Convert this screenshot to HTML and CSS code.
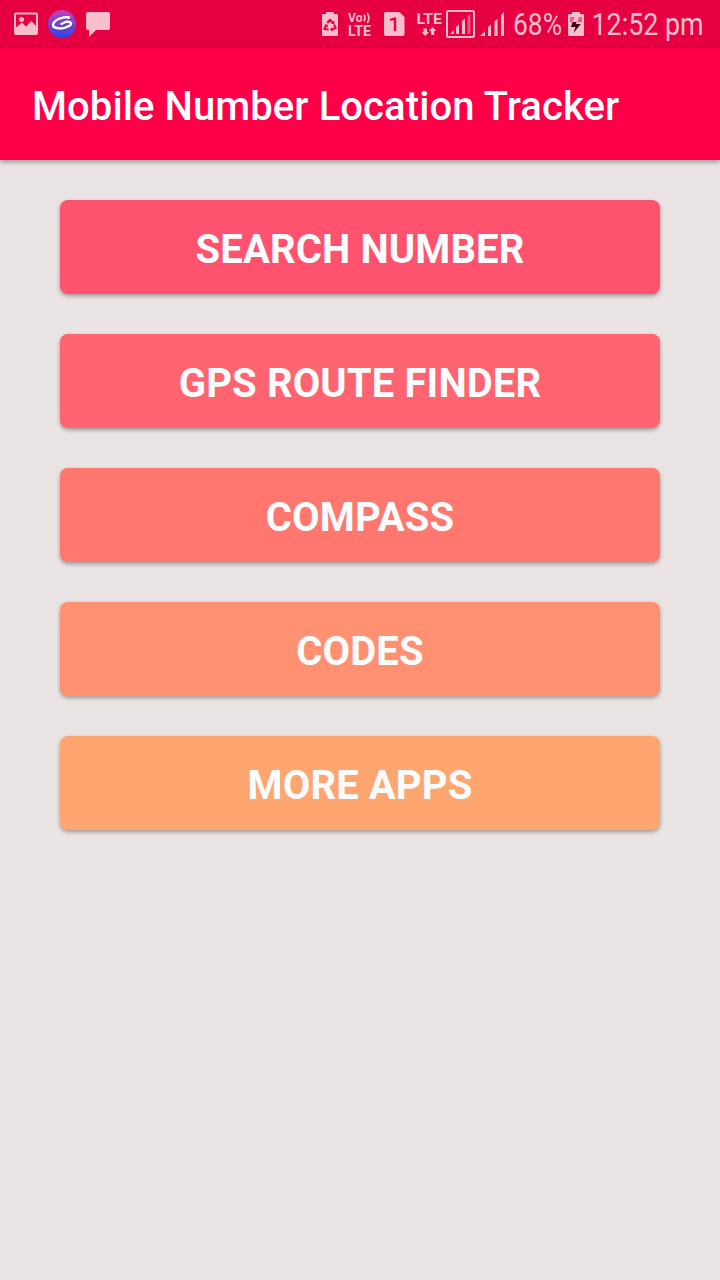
FILE: index.html
```html
<!DOCTYPE html>
<html lang="en">
<head>
<meta charset="utf-8">
<title>Mobile Number Location Tracker</title>
<link rel="stylesheet" href="styles.css">
</head>
<body>
<div class="status">
  <div class="notifications">
    <svg class="icon" width="24" height="48" viewBox="0 0 24 48"><path fill-rule="evenodd" d="M2 12.5H22Q24 12.5 24 14.5V33Q24 35 22 35H2Q0 35 0 33V14.5Q0 12.5 2 12.5ZM2 14.5V27.5L8 22.5L12 26.5L17.5 21L22 26V14.5Z"/><circle cx="7.5" cy="19.5" r="2.5"/></svg>
    <svg width="28" height="48" viewBox="0 0 28 48"><defs><linearGradient id="orb" x1="0" y1="0" x2="0" y2="1"><stop offset="0" stop-color="#c33fb4"/><stop offset=".5" stop-color="#7545d2"/><stop offset="1" stop-color="#2c43ed"/></linearGradient></defs><circle cx="14" cy="24" r="14" fill="url(#orb)"/><g fill="none" stroke-linejoin="round"><path d="M22 17.8C17 16 7 19 5 24.5C4.5 29.5 16 29.5 22 25.5C25 22.5 21 21.5 17.5 22L12.5 24.5" stroke="#34266e" stroke-width="2" transform="translate(.4 1)" opacity=".55"/><path d="M22 17.8C17 16 7 19 5 24.5C4.5 29.5 16 29.5 22 25.5C25 22.5 21 21.5 17.5 22L12.5 24.5" stroke="#fff" stroke-width="2.5"/></g></svg>
    <svg class="icon" width="24" height="48" viewBox="0 0 24 48"><path d="M2 12H22Q24 12 24 14V28Q24 30 22 30H10L3 37V30H2Q0 30 0 28V14Q0 12 2 12Z"/></svg>
  </div>
  <div class="system">
    <svg class="icon" width="16" height="48" viewBox="0 0 16 48"><path d="M4 12H12V14H15Q16 14 16 15V35Q16 36 15 36H1Q0 36 0 35V15Q0 14 1 14H4Z"/><g class="cut" stroke-width="2"><path d="M5.3 23L8 19.8L10.8 23M12 24.5L13.6 28.2L9.5 29.6M6.6 29.6L2.4 29L4.2 25"/></g><path class="cutfill" d="M12.5 20.5V24H9ZM10.5 27V31.5L7.8 29.5ZM2 24.8L5.5 24.4L6 27.5Z"/></svg>
    <svg class="icon volte" width="24" height="48" viewBox="0 0 24 48"><text x="0" y="22.4" font-size="13" textLength="14.5" lengthAdjust="spacingAndGlyphs">Vo</text><path d="M16 14.8Q18 18 16 21.2M19.2 13Q22.6 18 19.2 23" class="line wave"/><text x="0" y="36" font-size="14" textLength="23" lengthAdjust="spacingAndGlyphs">LTE</text></svg>
    <svg class="icon sim" width="20" height="48" viewBox="0 0 20 48"><path d="M2 12H15.5L20.5 17V34Q20.5 36 18.5 36H2Q0 36 0 34V14Q0 12 2 12Z"/><path class="cutfill" d="M6 20.8V18.8L10.5 17.5H12.2V31H9.8V20.3Z"/></svg>
    <svg class="icon lte" width="26" height="48" viewBox="0 0 26 48"><text x="-.5" y="24" font-size="15.5" textLength="25.5" lengthAdjust="spacingAndGlyphs">LTE</text><path d="M6.5 28.5H10V32H12L8.3 36L4.7 32H6.5ZM14 35V31H11.8L15.6 27L19.4 31H17.2V35Z"/></svg>
    <svg class="icon boxed" width="29" height="48" viewBox="0 0 29 48"><rect class="line" x="1" y="11" width="27" height="26" rx="1.5"/><path d="M4 34L8 30V34ZM10 27L13 24.5V34H10ZM16 21L19 18.5V34H16Z"/><path opacity=".45" d="M21.5 16.5L24.5 14V34H21.5Z"/></svg>
    <svg class="icon signal" width="24" height="48" viewBox="0 0 24 48"><path d="M0 36L5 31.5V36ZM8 27L11 24.5V36H8ZM14.5 21.5L17.5 19V36H14.5ZM21 15L24 12V36H21Z"/></svg>
    <svg class="icon percent" width="48" height="48" viewBox="0 0 48 48"><text x="-1" y="35" font-size="31" textLength="49" lengthAdjust="spacingAndGlyphs">68%</text></svg>
    <svg class="icon charge" width="16" height="48" viewBox="0 0 16 48"><path d="M4 12H12V14H15Q16 14 16 15V35Q16 36 15 36H1Q0 36 0 35V15Q0 14 1 14H4Z"/><path d="M2 17H14V22H2Z" fill="#f15a83"/><path fill="#f9bdcc" d="M7 17H11L9 22H4Z"/><path fill="#490016" d="M4.5 22H8.5L8 24H12.8L5.5 33L7.5 27H3Z"/></svg>
    <svg class="icon time" width="111" height="48" viewBox="0 0 111 48"><text x="-1.5" y="35" font-size="31" textLength="112" lengthAdjust="spacingAndGlyphs">12:52 pm</text></svg>
  </div>
</div>
<header class="appbar"><h1>Mobile Number Location Tracker</h1></header>
<main class="menu">
  <button class="item search">SEARCH NUMBER</button>
  <button class="item route">GPS ROUTE FINDER</button>
  <button class="item compass">COMPASS</button>
  <button class="item codes">CODES</button>
  <button class="item more">MORE APPS</button>
</main>
</body>
</html>
```
FILE: styles.css
```css
* { box-sizing: border-box; }
body { margin: 0; min-height: 1280px; background: #eae4e4; font-family: Roboto, sans-serif; }
svg { display: block; flex: none; overflow: visible; }
.status { height: 48px; background: #e60041; display: flex; justify-content: space-between; padding: 0 16px 0 14px; }
.notifications { display: flex; gap: 10px; }
.system { display: flex; }
.icon { fill: #f9bdcc; font-family: Roboto, sans-serif; }
.volte, .lte { font-weight: 700; }
.line { fill: none; stroke: #f9bdcc; stroke-width: 2; }
.wave { stroke-width: 1.7; }
.cut { fill: none; stroke: #e60041; }
.cutfill { fill: #e60041; }
.volte { margin-left: 10px; }
.sim { margin-left: 12px; }
.lte { margin-left: 13px; }
.boxed { margin-left: 3px; }
.signal { margin-left: 5px; }
.percent { margin-left: 10px; }
.charge { margin-left: 6px; }
.time { margin-left: 9px; }
.appbar { height: 112px; background: #ff0048; display: flex; align-items: center; padding: 6px 32px 0; box-shadow: 0 2px 5px rgba(0, 0, 0, .36); }
.appbar h1 { margin: 0; color: #fff; font-size: 40px; line-height: 48px; font-weight: 500; letter-spacing: .09px; white-space: nowrap; }
.menu { display: flex; flex-direction: column; gap: 40px; padding: 40px 60px; }
.item { height: 94px; border: 0; border-radius: 8px; padding: 6px 0 0; color: #fdfcfc; font: 700 40px/48px Roboto, sans-serif; letter-spacing: .13px; box-shadow: 0 2px 4px rgba(0, 0, 0, .34); }
.search { background: #ff526f; }
.route { background: #ff6470; }
.compass { background: #ff776f; }
.codes { background: #ff9071; }
.more { background: #ffa670; }
```
